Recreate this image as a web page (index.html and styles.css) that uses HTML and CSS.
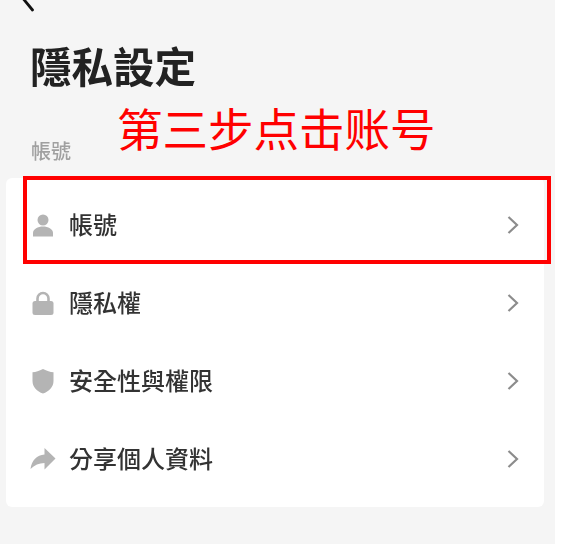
FILE: index.html
```html
<!DOCTYPE html>
<html lang="zh-Hant">
<head>
    <meta charset="UTF-8">
    <meta name="viewport" content="width=device-width,initial-scale=1.0">
    <title>隱私設定</title>
    <link rel="stylesheet" href="styles.css">
</head>
<body>
    <div class="screen">
        <svg class="back" width="20" height="12" viewBox="0 0 20 12">
            <path d="M2 -4L13.500 10" fill="none" stroke="#111" stroke-width="2.800" stroke-linecap="round"/>
        </svg>

        <h1 class="title">隱私設定</h1>

        <div class="section">
            <span class="label">帳號</span>
            <span class="step">第三步点击账号</span>
        </div>

        <div class="card">
            <div class="row">
                <svg class="icon" width="24" height="24" viewBox="0 0 24 24">
                    <circle cx="12" cy="7" r="5.500"/>
                    <path d="M2 23.500v-3.500c0-4 5-6.500 10-6.500s10 2.500 10 6.500v3.500z"/>
                </svg>
                <span class="name">帳號</span>
                <svg class="arrow" width="14" height="20" viewBox="0 0 14 20"><path d="M2.500 2L11 10L2.500 18"/></svg>
            </div>
            <div class="row">
                <svg class="icon" width="24" height="24" viewBox="0 0 24 24">
                    <path d="M6.500 11V7.500a5.500 5.500 0 0 1 11 0V11" fill="none" stroke="#b4b4b4" stroke-width="2.600"/>
                    <rect x="1.500" y="10" width="21" height="14" rx="2.500"/>
                </svg>
                <span class="name">隱私權</span>
                <svg class="arrow" width="14" height="20" viewBox="0 0 14 20"><path d="M2.500 2L11 10L2.500 18"/></svg>
            </div>
            <div class="row">
                <svg class="icon" width="24" height="26" viewBox="0 0 24 26">
                    <path d="M12 1C8 3 5 4 1.500 4.300V13c0 6 4.500 10.500 10.500 12.500c6-2 10.500-6.500 10.500-12.500V4.300C19 4 16 3 12 1z"/>
                </svg>
                <span class="name">安全性與權限</span>
                <svg class="arrow" width="14" height="20" viewBox="0 0 14 20"><path d="M2.500 2L11 10L2.500 18"/></svg>
            </div>
            <div class="row">
                <svg class="icon icon-wide" width="26" height="24" viewBox="0 0 26 24">
                    <path d="M14.500 1L25.500 11.500L14.500 22.500V16C9 16 4.500 18 0.500 22C1.500 13.500 7 8 14.500 7.500z"/>
                </svg>
                <span class="name">分享個人資料</span>
                <svg class="arrow" width="14" height="20" viewBox="0 0 14 20"><path d="M2.500 2L11 10L2.500 18"/></svg>
            </div>
            <div class="highlight"></div>
        </div>
    </div>
</body>
</html>
```

FILE: styles.css
```css
body{
    margin:0;
    background:#fff;
    font-family:"Noto Sans CJK TC","Noto Sans",sans-serif;
    overflow:hidden;
}

.screen{
    width:555px;
    height:544px;
    background:#f5f5f5;
    overflow:hidden;
}

.back{
    display:block;
    margin-left:19px;
}

.title{
    margin:27px 0 0 30px;
    font-size:41.500px;
    line-height:52px;
    font-weight:700;
    color:#222;
    filter:blur(0.5px);
}

.section{
    display:flex;
    align-items:flex-end;
    height:87px;
}

.label{
    margin-left:31px;
    margin-bottom:14px;
    font-size:20px;
    line-height:26px;
    font-weight:500;
    color:#a0a0a0;
    filter:blur(0.5px);
}

.step{
    margin-left:46px;
    margin-bottom:25px;
    font-size:45.500px;
    line-height:52px;
    color:#f00;
    font-family:"Noto Sans CJK SC",sans-serif;
}

.card{
    position:relative;
    width:538px;
    height:329px;
    margin-left:6px;
    padding-top:8px;
    box-sizing:border-box;
    background:#fff;
    border-radius:6px;
}

.row{
    display:flex;
    align-items:center;
    height:78px;
    padding:0 24px 0 25px;
}

.icon{
    flex:none;
    margin-right:14px;
    fill:#b4b4b4;
    filter:blur(0.5px);
}

.icon-wide{
    margin-left:-1px;
    margin-right:13px;
}

.name{
    flex:1;
    margin-bottom:2px;
    font-size:24px;
    line-height:30px;
    font-weight:500;
    color:#333;
    filter:blur(0.6px);
}

.arrow{
    flex:none;
    filter:blur(0.3px);
}

.arrow path{
    fill:none;
    stroke:#8c8c8c;
    stroke-width:2.200;
}

/* red box from the tutorial, sits over the first row */
.highlight{
    position:absolute;
    left:17px;
    top:-2px;
    width:528px;
    height:88px;
    box-sizing:border-box;
    border:4px solid #f00;
}
```
